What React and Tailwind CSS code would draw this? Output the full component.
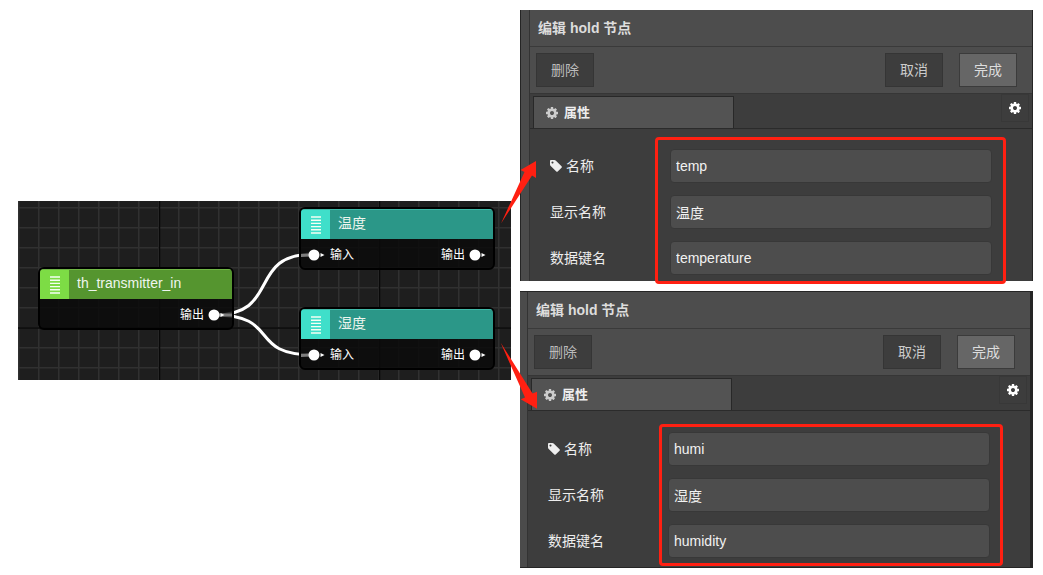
import React from 'react';

const CogIcon = ({ className }) => (
    <svg className={className} viewBox="0 128 1536 1536" fill="currentColor" fillRule="evenodd" aria-hidden="true">
        <path d="M1024 896q0 106-75 181t-181 75-181-75-75-181 75-181 181-75 181 75 75 181zm512-109v222q0 12-8 23t-20 13l-185 28q-19 54-39 91 35 50 107 138 10 12 10 25t-9 23q-27 37-99 108t-94 71q-12 0-26-9l-138-108q-44 23-91 38-16 136-29 186-7 28-36 28h-222q-14 0-24.5-8.5t-11.5-21.5l-28-184q-49-16-90-37l-141 107q-10 9-25 9-14 0-25-11-126-114-165-168-7-10-7-23 0-12 8-23 15-21 51-66.5t54-70.5q-27-50-41-99l-183-27q-13-2-21-12.5t-8-23.5v-222q0-12 8-23t19-13l186-28q14-46 39-92-40-57-107-138-10-12-10-24 0-10 9-23 26-36 98.5-107.5t94.5-71.5q13 0 26 10l138 107q44-23 91-38 16-136 29-186 7-28 36-28h222q14 0 24.5 8.5t11.5 21.5l28 184q49 16 90 37l142-107q9-9 24-9 13 0 25 10 129 119 165 170 7 8 7 22 0 12-8 23-15 21-51 66.5t-54 70.5q26 50 41 98l183 28q13 2 21 12.500t8 23.500z" />
    </svg>
);

const TagIcon = () => (
    <svg className="w-3 h-3" viewBox="128 128 1536 1536" fill="currentColor" fillRule="evenodd" aria-hidden="true">
        <path d="M576 448q0-53-37.5-90.5t-90.5-37.5-90.5 37.5-37.5 90.5 37.5 90.5 90.5 37.5 90.5-37.5 37.5-90.5zm1067 576q0 53-37 90l-491 492q-39 37-91 37-53 0-90-37l-715-716q-38-37-64.5-101t-26.5-117v-416q0-52 38-90t90-38h416q53 0 117 26.5t102 64.5l715 714q37 39 37 91z" />
    </svg>
);

// linked: false, 'in' or 'out' draws the dimmed wire end inside the node
const Port = ({ linked }) => (
    <svg className="w-4 h-3 overflow-visible shrink-0" viewBox="0 0 16 12" aria-hidden="true">
        {linked === 'in' && <path d="M-9 6.5L2 6" stroke="#7d7d7d" strokeWidth="3" />}
        {linked === 'out' && <path d="M10 6H25" stroke="#7d7d7d" strokeWidth="3" />}
        <circle cx="6" cy="6" r="5.5" fill="#fff" />
        <path d="M12.5 4L16.500 6L12.500 8Z" fill="#fff" />
    </svg>
);

const Node = ({ title, position, headerClass, iconClass, input, linkedOut }) => (
    <div className={`absolute w-[196px] rounded-md border-2 border-black bg-[#0a0a0a]/85 overflow-hidden ${position}`}>
        <div className={`flex h-[30px] items-center border-t ${headerClass}`}>
            <div className={`flex w-[29px] self-stretch items-center justify-center ${iconClass}`}>
                <svg className="w-[10px] h-[18px]" viewBox="0 0 10 18" aria-hidden="true">
                    <path d="M0 1H10M0 4.200H10M0 7.400H10M0 10.600H10M0 13.800H10M0 17H10" stroke="#f4fff4" strokeWidth="1.400" />
                </svg>
            </div>
            <span className="pl-2 pb-[3px] text-sm text-[#eef5ee]">{title}</span>
        </div>
        <div className="flex h-[29px] items-center pl-[7px] pr-2 pt-[2px] text-xs text-white">
            {input && (
                <>
                    <Port linked="in" />
                    <span className="pl-[6px]">输入</span>
                </>
            )}
            <span className="ml-auto pr-1">输出</span>
            <Port linked={linkedOut && 'out'} />
        </div>
    </div>
);

const Canvas = () => (
    <div className="relative mt-[191px] w-[493px] h-[179px] shrink-0 overflow-hidden bg-[#1e1e1e]">
        <svg className="absolute inset-0 w-full h-full" aria-hidden="true">
            <defs>
                <pattern id="grid" x="20" y="6" width="20" height="20" patternUnits="userSpaceOnUse">
                    <path d="M0 .75H20M.75 0V20" stroke="#303030" strokeWidth="1.500" />
                </pattern>
            </defs>
            <rect width="100%" height="100%" fill="url(#grid)" />
            <path d="M141.500 0V179M361.500 0V179M0 127H493" stroke="#080808" strokeWidth="1.500" />
            <g fill="none" stroke="#fff" strokeWidth="3">
                <path d="M196 114C264 114 228 53 296 53" />
                <path d="M196 114C264 114 228 154 296 154" />
            </g>
        </svg>
        <Node
            title="th_transmitter_in"
            position="left-5 top-[66px]"
            headerClass="bg-[#55952f] border-[#6fb544]"
            iconClass="bg-[#7ddc45]"
            linkedOut
        />
        <Node
            title="温度"
            position="left-[281px] top-[6px]"
            headerClass="bg-[#2b9788] border-[#3fb8a6]"
            iconClass="bg-[#3fdfca]"
            input
        />
        <Node
            title="湿度"
            position="left-[281px] top-[106px]"
            headerClass="bg-[#2b9788] border-[#3fb8a6]"
            iconClass="bg-[#3fdfca]"
            input
        />
    </div>
);

const Field = ({ id, label, value, icon }) => (
    <div className="flex items-center">
        <label htmlFor={id} className="flex w-[120px] items-center gap-1 text-sm text-[#eee]">
            {icon}
            {label}
        </label>
        <input
            id={id}
            type="text"
            defaultValue={value}
            className="h-[34px] min-w-0 flex-1 rounded border border-[#383838] bg-[#4d4d4d] px-[5px] text-sm text-[#f2f2f2] outline-none"
        />
    </div>
);

const EditPanel = ({ id, fields, panelClass, stripClass, bodyClass, frameClass }) => (
    <section className={`flex border-[#252525] bg-[#3d3d3d] ${panelClass}`}>
        <div className={`shrink-0 border-r border-[#333] bg-[#4b4b4b] ${stripClass}`}></div>
        <div className="min-w-0 flex-1">
            <h2 className="h-[37px] border-b border-[#3a3a3a] bg-[#4d4d4d] pl-2 text-sm leading-9 font-bold text-[#ddd]">编辑 hold 节点</h2>

            <div className="flex h-[47px] items-center gap-4 border-b border-[#363636] bg-[#4d4d4d] pl-[6px] pr-[15px]">
                <button className="h-[34px] w-[58px] border border-[#353535] bg-[#3d3d3d] text-sm text-[#bbb]">删除</button>
                <button className="ml-auto h-[34px] w-[58px] border border-[#353535] bg-[#3d3d3d] text-sm text-[#ccc]">取消</button>
                <button className="h-[34px] w-[58px] border border-[#3b3b3b] bg-[#666] text-sm text-[#ddd]">完成</button>
            </div>

            <div className="flex h-[35px] items-end justify-between border-b border-[#2b2b2b] pl-[3px] pr-[3px]">
                <button className="flex h-8 w-[201px] items-center gap-[6px] border border-b-0 border-[#282828] bg-[#535353] pl-3 text-[13px] font-bold text-[#eee]">
                    <CogIcon className="w-3 h-3 text-[#ccc]" />
                    属性
                </button>
                <button aria-label="设置" className="flex h-7 w-7 self-start items-center justify-center border border-[#383838] text-white">
                    <CogIcon className="w-3 h-3" />
                </button>
            </div>

            <form className={`pl-5 pr-10 ${bodyClass}`}>
                <div className="relative flex flex-col gap-3">
                    <Field id={`${id}-name`} label="名称" value={fields.name} icon={<TagIcon />} />
                    <Field id={`${id}-label`} label="显示名称" value={fields.label} />
                    <Field id={`${id}-key`} label="数据键名" value={fields.key} />
                    <div className={`pointer-events-none absolute rounded border-3 border-[#ff2012] ${frameClass}`}></div>
                </div>
            </form>
        </div>
    </section>
);

export default function App() {
    return (
        <main className="relative flex min-h-screen gap-[9px] bg-white pt-[10px] pl-[18px] pr-[10px] font-['Liberation_Sans','Noto_Sans_CJK_SC',sans-serif]">
            <Canvas />

            <div className="flex min-w-0 flex-1 flex-col gap-[10px]">
                <EditPanel
                    id="temp"
                    fields={{ name: 'temp', label: '温度', key: 'temperature' }}
                    panelClass="border-l border-r"
                    stripClass="w-[9px]"
                    bodyClass="pt-5 pb-[6px]"
                    frameClass="left-[105px] -right-[14px] -top-[12px] -bottom-[9px]"
                />
                <EditPanel
                    id="humi"
                    fields={{ name: 'humi', label: '湿度', key: 'humidity' }}
                    panelClass="border-t border-b border-r-3"
                    stripClass="w-2"
                    bodyClass="pt-[21px] pb-[9px]"
                    frameClass="left-[111px] -right-[13px] -top-[8px] -bottom-[8px]"
                />
            </div>

            {/* Arrows from each node to its panel */}
            <svg className="pointer-events-none absolute left-[500px] top-[160px] w-10 h-[250px]" viewBox="500 160 40 250" fill="#ff2012" aria-hidden="true">
                <path d="M536 161L520.500 170L524.500 172L501 223.500L532 175.500L536 178Z" />
                <path d="M537 408.700L520.700 399.300L525 397.500L500.700 342.700L532.500 393.500L537 391.700Z" />
            </svg>
        </main>
    );
}
